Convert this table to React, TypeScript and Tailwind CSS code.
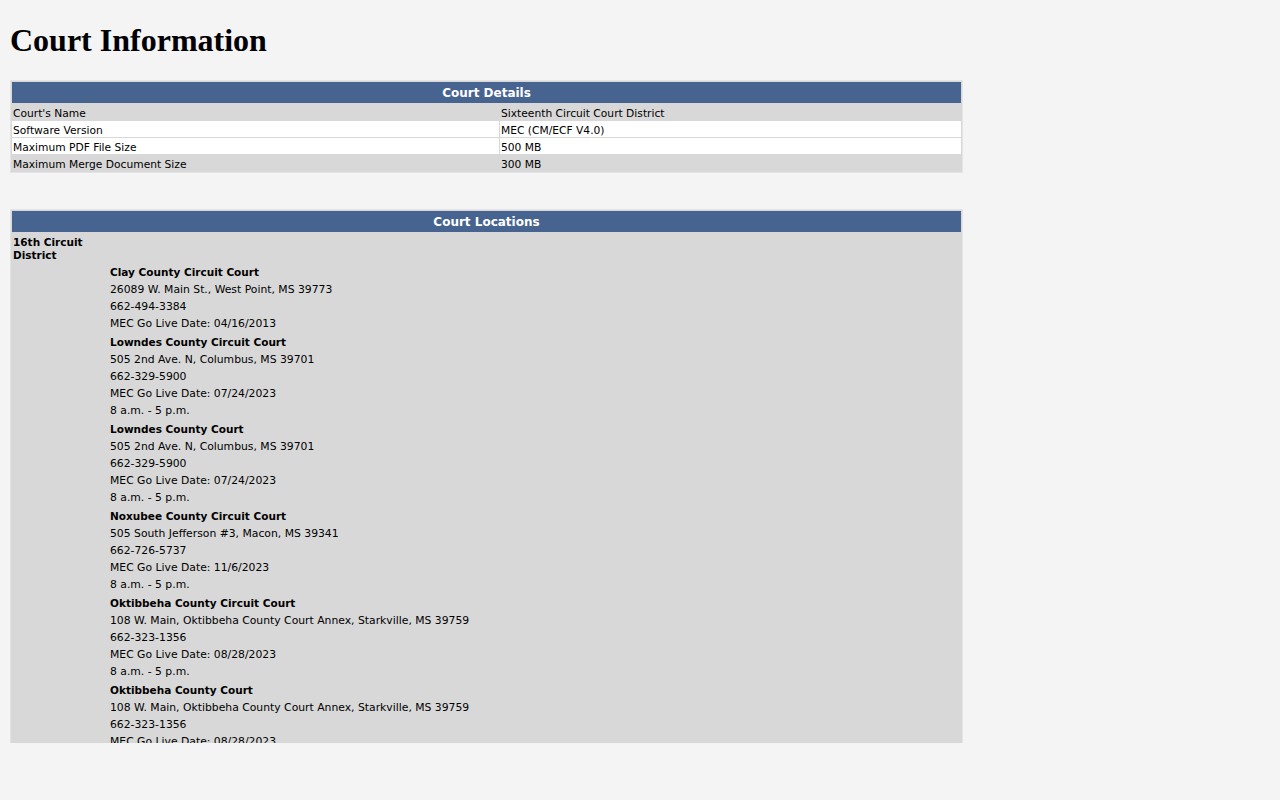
import React from "react";

const details: [string, string, boolean][] = [
  ["Court's Name", "Sixteenth Circuit Court District", false],
  ["Software Version", "MEC (CM/ECF V4.0)", true],
  ["Maximum PDF File Size", "500 MB", true],
  ["Maximum Merge Document Size", "300 MB", false],
];

const locations: { name: string; lines: string[] }[] = [
  {
    name: "Clay County Circuit Court",
    lines: ["26089 W. Main St., West Point, MS 39773", "662-494-3384", "MEC Go Live Date: 04/16/2013"],
  },
  {
    name: "Lowndes County Circuit Court",
    lines: ["505 2nd Ave. N, Columbus, MS 39701", "662-329-5900", "MEC Go Live Date: 07/24/2023", "8 a.m. - 5 p.m."],
  },
  {
    name: "Lowndes County Court",
    lines: ["505 2nd Ave. N, Columbus, MS 39701", "662-329-5900", "MEC Go Live Date: 07/24/2023", "8 a.m. - 5 p.m."],
  },
  {
    name: "Noxubee County Circuit Court",
    lines: ["505 South Jefferson #3, Macon, MS 39341", "662-726-5737", "MEC Go Live Date: 11/6/2023", "8 a.m. - 5 p.m."],
  },
  {
    name: "Oktibbeha County Circuit Court",
    lines: [
      "108 W. Main, Oktibbeha County Court Annex, Starkville, MS 39759",
      "662-323-1356",
      "MEC Go Live Date: 08/28/2023",
      "8 a.m. - 5 p.m.",
    ],
  },
  {
    name: "Oktibbeha County Court",
    lines: [
      "108 W. Main, Oktibbeha County Court Annex, Starkville, MS 39759",
      "662-323-1356",
      "MEC Go Live Date: 08/28/2023",
      "8 a.m. - 5 p.m.",
    ],
  },
];

export default function App() {
  return (
    <div className="min-h-[800px] bg-[#f4f4f4] px-[10px] pt-[22px] text-black [font-family:'DejaVu_Sans',Verdana,sans-serif]">
      <h1 className="text-[32px] font-bold leading-[37px] [font-family:'Liberation_Serif','Times_New_Roman',serif]">
        Court Information
      </h1>

      <div className="mt-[21px] flex w-[953px] flex-col gap-px border border-[#e4e4e4] bg-[#d8d8d8] p-px">
        <div className="flex h-[21px] items-center justify-center bg-[#476390] pt-px text-[12px] font-bold text-white">
          Court Details
        </div>
        {details.map(([k, v, white]) => (
          <div key={k} className="grid h-[16px] grid-cols-[487px_461px] gap-px text-[10.7px] leading-[13px]">
            <div className={`px-px pt-[3px] ${white ? "bg-white" : "bg-[#d8d8d8]"}`}>{k}</div>
            <div className={`px-px pt-[3px] ${white ? "bg-white" : "bg-[#d8d8d8]"}`}>{v}</div>
          </div>
        ))}
      </div>

      <div className="mt-[36px] flex h-[534px] w-[953px] flex-col gap-px overflow-hidden border border-b-0 border-[#e4e4e4] bg-[#d8d8d8] p-px pb-0">
        <div className="flex h-[21px] shrink-0 items-center justify-center bg-[#476390] pt-px text-[12px] font-bold text-white">
          Court Locations
        </div>
        <div className="flex flex-col">
          <div className="w-[96px] px-px pt-[3px] pb-px text-[10.5px] font-bold leading-[13px]">
            16th Circuit District
          </div>
          <div className="flex flex-col pl-[98px] text-[10.8px] leading-[17px]">
            {locations.map((loc, i) => (
              <div key={i} className="py-px">
                <div className="text-[10.5px] font-bold">{loc.name}</div>
                {loc.lines.map((l, j) => (
                  <div key={j}>{l}</div>
                ))}
              </div>
            ))}
          </div>
        </div>
      </div>
    </div>
  );
}
